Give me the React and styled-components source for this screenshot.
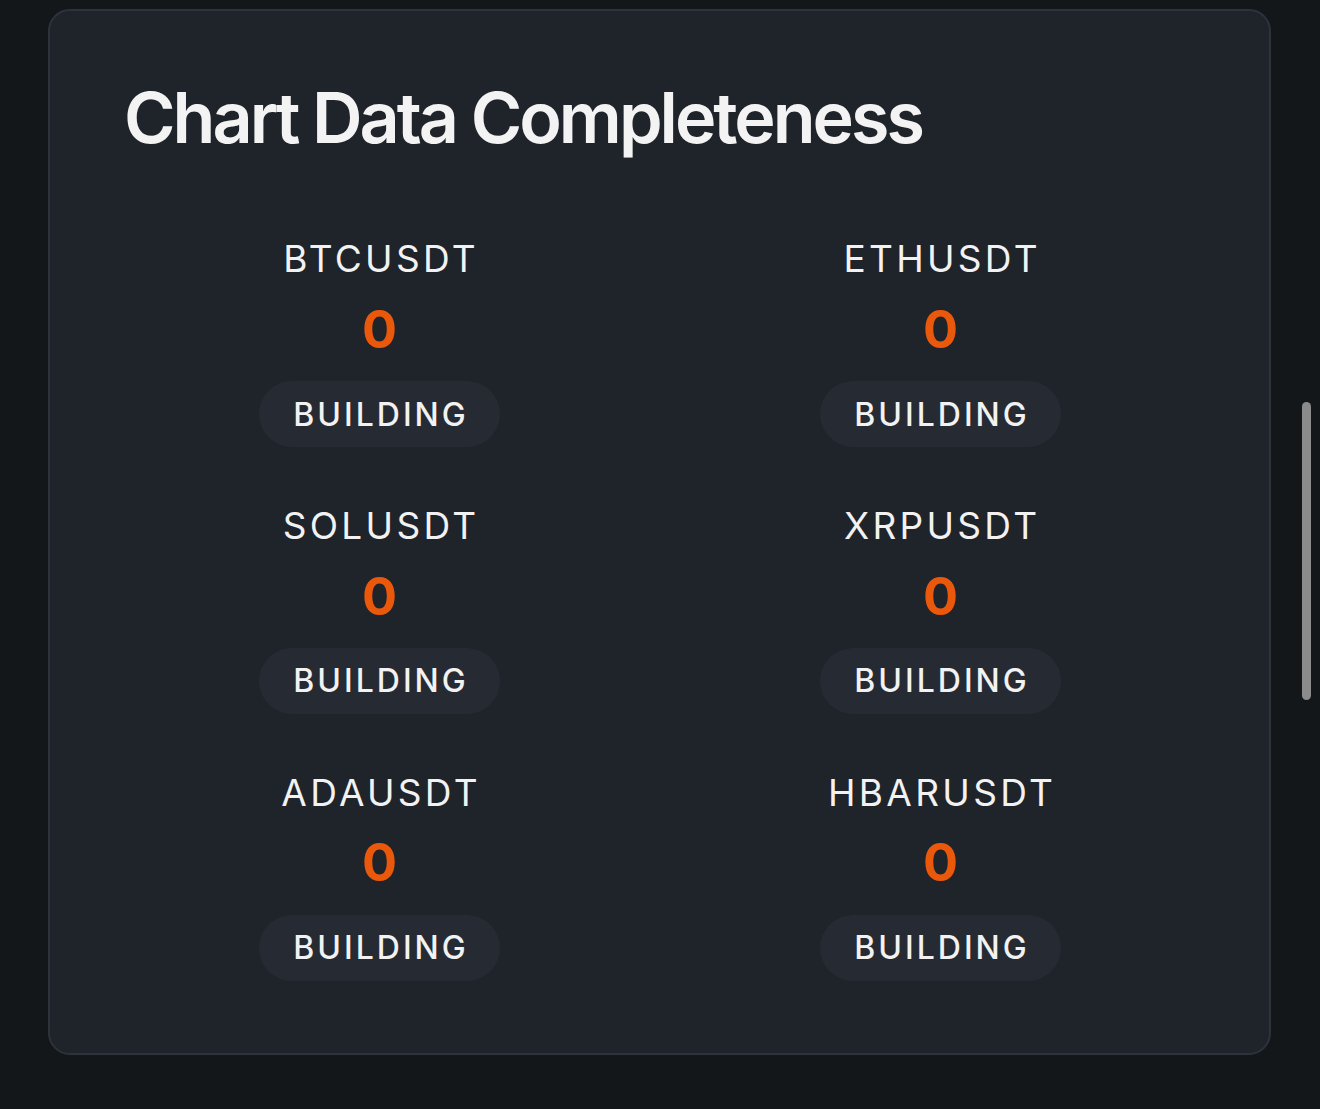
import React from "react";
import styled, { createGlobalStyle } from "styled-components";

const Global = createGlobalStyle`
  html, body { margin: 0; padding: 0; background: #14171a; }
  body { font-family: Inter, "Noto Sans", "Liberation Sans", sans-serif; color: #f2f2f2; }
  * { box-sizing: border-box; }
`;

const Page = styled.div`
  min-height: 1109px;
  padding: 9px 49px 0 48px;
`;

const Card = styled.section`
  background: #1f232a;
  border: 2px solid #2c333c;
  border-radius: 22px;
  padding: 64px 71px 72px 71px;
`;

const Title = styled.h2`
  margin: 0;
  font-size: 70px;
  line-height: 1.234;
  font-weight: 600;
  letter-spacing: -3px;
  color: #f3f3f3;
  padding-left: 3px;
`;

const Grid = styled.div`
  margin-top: 76px;
  display: grid;
  grid-template-columns: 517px 517px;
  column-gap: 44px;
  row-gap: 57px;
`;

const Cell = styled.div`
  display: flex;
  flex-direction: column;
  align-items: center;
`;

const Symbol = styled.div`
  font-size: 37px;
  line-height: 1.2;
  font-weight: 400;
  letter-spacing: 3.3px;
  padding-left: 3.3px;
  color: #f2f2f2;
`;

const Count = styled.div`
  margin-top: 17px;
  font-size: 52px;
  line-height: 1.2;
  font-weight: 700;
  color: #ea580c;
`;

const Badge = styled.div`
  margin-top: 20px;
  height: 66px;
  width: 241px;
  border-radius: 33px;
  background: #262b33;
  display: flex;
  align-items: center;
  justify-content: center;
  font-size: 32px;
  font-weight: 500;
  letter-spacing: 3px;
  padding-left: 3px;
  color: #f2f2f2;
`;

const ScrollThumb = styled.div`
  position: fixed;
  left: 1302px;
  top: 402px;
  width: 9px;
  height: 298px;
  border-radius: 5px;
  background: #8b8b8b;
`;

const pairs = ["BTCUSDT", "ETHUSDT", "SOLUSDT", "XRPUSDT", "ADAUSDT", "HBARUSDT"];

export default function App() {
  return (
    <Page>
      <Global />
      <Card>
        <Title>Chart Data Completeness</Title>
        <Grid>
          {pairs.map((p) => (
            <Cell key={p}>
              <Symbol>{p}</Symbol>
              <Count>0</Count>
              <Badge>BUILDING</Badge>
            </Cell>
          ))}
        </Grid>
      </Card>
      <ScrollThumb />
    </Page>
  );
}
